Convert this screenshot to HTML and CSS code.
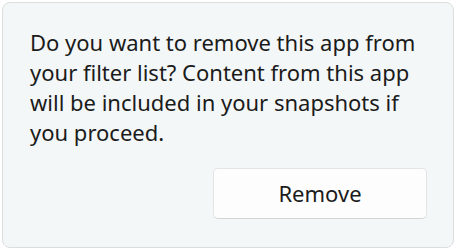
FILE: index.html
```html
<!DOCTYPE html>
<html>
<head>
<meta charset="utf-8">
<link rel="stylesheet" href="styles.css">
</head>
<body>
<div class="flyout">
  <p class="message">Do you want to remove this app from your filter list? Content from this app will be included in your snapshots if you proceed.</p>
  <div class="actions">
    <button class="btn">Remove</button>
  </div>
</div>
</body>
</html>
```
FILE: styles.css
```css
html, body {
  margin: 0;
  padding: 0;
  background: #ffffff;
}
body {
  padding: 2px;
  width: 456px;
  height: 250px;
  box-sizing: border-box;
  font-family: "Noto Sans", "Open Sans", sans-serif;
}
.flyout {
  box-sizing: border-box;
  height: 246px;
  background: #f3f7f7;
  border: 1px solid #dcdede;
  border-radius: 8px;
  padding: 24px 26px 0 27px;
  display: flex;
  flex-direction: column;
}
.message {
  margin: 0;
  font-size: 22px;
  line-height: 30px;
  color: #1b1b1b;
  width: 395px;
}
.actions {
  display: flex;
  justify-content: flex-end;
  margin-top: 21px;
}
.btn {
  width: 214px;
  height: 51px;
  background: #fdfdfd;
  border: 1px solid #e3e5e5;
  border-bottom-color: #d3d5d5;
  border-radius: 5px;
  font-family: inherit;
  font-size: 22px;
  color: #1b1b1b;
  padding: 0 0 2px;
}
```
